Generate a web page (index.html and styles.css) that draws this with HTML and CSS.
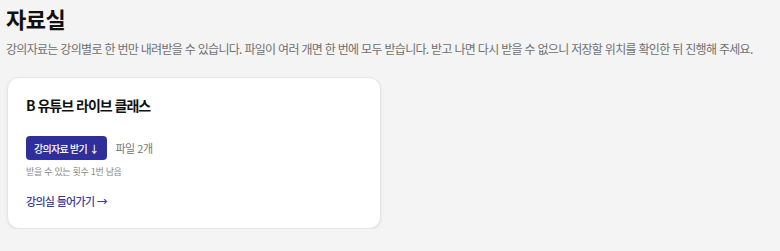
FILE: index.html
```html
<!DOCTYPE html>
<html lang="ko">
<head>
    <meta charset="UTF-8">
    <meta name="viewport" content="width=device-width, initial-scale=1.0">
    <title>자료실</title>
    <link rel="stylesheet" href="styles.css">
</head>
<body>
    <h1 class="page-title">자료실</h1>
    <p class="page-desc">강의자료는 강의별로 한 번만 내려받을 수 있습니다. 파일이 여러 개면 한 번에 모두 받습니다. 받고 나면 다시 받을 수 없으니 저장할 위치를 확인한 뒤 진행해 주세요.</p>

    <div class="class-card">
        <h2 class="class-name">B 유튜브 라이브 클래스</h2>
        <div class="download-row">
            <button class="download-btn">강의자료 받기 ↓</button>
            <span class="file-count">파일 2개</span>
        </div>
        <p class="remain">받을 수 있는 횟수 1번 남음</p>
        <a class="enter-link" href="#">강의실 들어가기 →</a>
    </div>
</body>
</html>
```

FILE: styles.css
```css
body {
    margin: 0;
    padding: 0 6px;
    background-color: #f4f4f4;
    font-family: "Noto Sans CJK KR", "Noto Sans", sans-serif;
    color: #111;
}

.page-title {
    margin: 3px 0 0;
    font-size: 22px;
    line-height: 30px;
    font-weight: 700;
    letter-spacing: -0.5px;
}

.page-desc {
    margin: 7px 0 0;
    font-size: 12px;
    line-height: 18px;
    color: #707070;
    letter-spacing: -0.7px;
    white-space: nowrap;
}

/* 강의 카드 */
.class-card {
    width: 374px;
    box-sizing: border-box;
    margin: 19px 0 0 1px;
    padding: 17px 18px 17px;
    background-color: #fff;
    border: 1px solid #e6e6e6;
    border-radius: 12px;
    box-shadow: 0 1px 3px rgba(0,0,0,0.08);
}
.class-name {
    margin: 0;
    font-size: 14px;
    line-height: 20px;
    font-weight: 600;
    letter-spacing: -1px;
}
.download-row {
    display: flex;
    align-items: center;
    gap: 9px;
    margin-top: 21px;
}
.download-btn {
    height: 24px;
    padding: 0 8px;
    border: none;
    border-radius: 4px;
    background-color: #2f2f9b;
    color: #fff;
    font-family: inherit;
    font-size: 10px;
    font-weight: 500;
    letter-spacing: -0.7px;
    cursor: pointer;
}
.file-count {
    font-size: 11px;
    color: #777;
    letter-spacing: -0.5px;
}
.remain {
    margin: 5px 0 0;
    font-size: 9px;
    line-height: 14px;
    color: #888;
    letter-spacing: -0.3px;
}
.enter-link {
    display: inline-block;
    margin-top: 14px;
    font-size: 11px;
    line-height: 16px;
    font-weight: 500;
    color: #3a3a9c;
    text-decoration: none;
    letter-spacing: -0.7px;
}
```
